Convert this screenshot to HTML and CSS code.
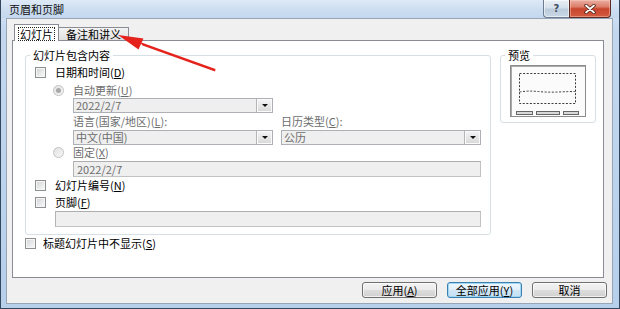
FILE: index.html
```html
<!DOCTYPE html>
<html lang="zh-CN">
<head>
<meta charset="utf-8">
<title>页眉和页脚</title>
<link rel="stylesheet" href="styles.css">
</head>
<body>
<div class="window">
  <div class="titlebar">
    <span class="title">页眉和页脚</span>
    <div class="caption">
      <div class="cap-btn help">?</div>
      <div class="cap-btn close">
        <svg width="12" height="10" viewBox="0 0 12 10">
          <path d="M2 1.5 L10 8.5 M10 1.5 L2 8.5" stroke="#4a1a12" stroke-width="3.4" stroke-linecap="round"/>
          <path d="M2 1.5 L10 8.5 M10 1.5 L2 8.5" stroke="#ffffff" stroke-width="1.8" stroke-linecap="round"/>
        </svg>
      </div>
    </div>
  </div>

  <div class="client">
    <div class="tabs">
      <div class="tab active"><span class="focus">幻灯片</span></div>
      <div class="tab">备注和讲义</div>
    </div>

    <div class="panel">
      <div class="groups">
        <div class="group main">
          <span class="group-label">幻灯片包含内容</span>
          <div class="row r-date"><span class="check"></span>日期和时间(<u>D</u>)</div>
          <div class="row r-auto dis"><span class="radio on"></span>自动更新(<u>U</u>)</div>
          <div class="combo c-date"><span class="ctext">2022/2/7</span><span class="drop"></span></div>
          <div class="pair">
            <div class="lbl dis">语言(国家/地区)(<u>L</u>):</div>
            <div class="lbl dis">日历类型(<u>C</u>):</div>
            <div class="combo"><span class="ctext">中文(中国)</span><span class="drop"></span></div>
            <div class="combo"><span class="ctext">公历</span><span class="drop"></span></div>
          </div>
          <div class="row r-fixed dis"><span class="radio"></span>固定(<u>X</u>)</div>
          <div class="field f-fixed">2022/2/7</div>
          <div class="row r-num"><span class="check"></span>幻灯片编号(<u>N</u>)</div>
          <div class="row r-foot"><span class="check"></span>页脚(<u>F</u>)</div>
          <div class="field f-foot"></div>
        </div>

        <div class="group preview">
          <span class="group-label">预览</span>
          <svg class="thumb" width="76" height="52" viewBox="0 0 76 52">
            <rect x="0.5" y="0.5" width="75" height="51" fill="#fbfbfb" stroke="#8c8c8c"/>
            <path d="M1 1.5 H75 M1.5 1 V51" stroke="#a9a9a9"/>
            <rect x="9.5" y="8.5" width="56" height="30" fill="none" stroke="#3a3a3a" stroke-dasharray="2 1.6"/>
            <path d="M9.5 27 Q 18 25.5 28 26.5 T 48 27 T 65.5 26.5" fill="none" stroke="#3a3a3a" stroke-dasharray="2 1.6"/>
            <rect x="6.5" y="46.5" width="16" height="3" fill="#d9d9d9" stroke="#666"/>
            <rect x="26.5" y="46.5" width="23" height="3" fill="#d9d9d9" stroke="#666"/>
            <rect x="53.5" y="46.5" width="15" height="3" fill="#d9d9d9" stroke="#666"/>
          </svg>
        </div>
      </div>

      <div class="row r-title"><span class="check"></span>标题幻灯片中不显示(<u>S</u>)</div>
    </div>

    <div class="buttons">
      <div class="btn">应用(<u>A</u>)</div>
      <div class="btn default">全部应用(<u>Y</u>)</div>
      <div class="btn">取消</div>
    </div>
  </div>

  <svg class="arrow" width="620" height="309" viewBox="0 0 620 309">
    <polygon points="117,35 142.5,38.5 137.5,49.5" fill="#e5231c"/>
    <polygon points="139,42 141.5,45.5 214,71.5 214.5,69" fill="#e5231c"/>
  </svg>
</div>
</body>
</html>
```
FILE: styles.css
```css
* { box-sizing: border-box; }

html, body {
  margin: 0;
  padding: 0;
  width: 620px;
  height: 309px;
  overflow: hidden;
  background: #2c3b4c;
}

body {
  font-family: "Noto Sans CJK SC", "Noto Sans", sans-serif;
  font-size: 11px;
  line-height: 14px;
  color: #000;
}

u { text-decoration: underline; text-underline-offset: 1px; }

.window {
  position: relative;
  width: 620px;
  height: 309px;
  border: 1px solid #34475c;
  border-top: none;
  padding: 0 6px 4px 5px;
  background: linear-gradient(180deg, #d8e6f5 0%, #c3d8ef 10%, #bcd3ed 60%, #b6cfea 100%);
}

.titlebar {
  height: 18px;
  display: flex;
  align-items: flex-start;
  background: linear-gradient(180deg, #dde9f6 0%, #cbdcf0 60%, #c2d7ee 100%);
  margin: 0 -6px 0 -5px;
  padding: 0 8px 0 7px;
}

.title {
  padding-left: 1px;
  line-height: 18px;
  font-size: 11px;
  color: #101010;
}

.caption {
  margin-left: auto;
  display: flex;
}

.cap-btn {
  height: 18px;
  display: flex;
  align-items: center;
  justify-content: center;
}

.help {
  width: 26px;
  border: 1px solid #6b7c90;
  border-top: none;
  border-right: none;
  border-radius: 0 0 0 4px;
  background: linear-gradient(180deg, #e9eff6 0%, #d5e0eb 48%, #bccbdb 52%, #c9d7e6 100%);
  color: #3e4c5c;
  font-family: "DejaVu Sans", sans-serif;
  font-size: 10px;
  font-weight: bold;
  box-shadow: inset 0 0 0 1px rgba(255,255,255,0.55);
}

.close {
  width: 42px;
  border: 1px solid #5b2a22;
  border-top: none;
  border-radius: 0 0 4px 0;
  background: linear-gradient(180deg, #eab0a3 0%, #dc7d69 40%, #c8452d 52%, #d25a40 100%);
  box-shadow: inset 0 0 0 1px rgba(255,210,200,0.45);
}

.client {
  height: 286px;
  border: 1px solid #97a5b6;
  background: #f0f0f0;
  display: flex;
  flex-direction: column;
}

.tabs {
  margin: 5px 0 0 7px;
  height: 16px;
  display: flex;
  align-items: flex-end;
}

.tab {
  height: 13px;
  border: 1px solid #898c95;
  border-bottom: none;
  border-left: none;
  padding: 0 7px;
  line-height: 12px;
  background: linear-gradient(180deg, #f3f3f3 0%, #ebebeb 50%, #e0e0e0 100%);
  white-space: nowrap;
}

.tab.active {
  position: relative;
  z-index: 1;
  height: 17px;
  margin-bottom: -1px;
  border-left: 1px solid #898c95;
  padding: 2px 3px 0 3px;
  background: #fff;
}

.focus {
  display: inline-block;
  border: 1px dotted #222;
  padding: 0 1px;
  line-height: 12px;
}

.panel {
  height: 238px;
  margin: 0 8px 0 5px;
  border: 1px solid #898c95;
  background: #fff;
  padding: 14px 7px 0 12px;
}

.groups {
  display: flex;
  align-items: flex-start;
  gap: 9px;
}

.group {
  position: relative;
  border: 1px solid #d5dfe5;
  border-radius: 3px;
}

.group-label {
  position: absolute;
  top: -8px;
  left: 4px;
  padding: 0 3px;
  background: #fff;
  line-height: 14px;
  white-space: nowrap;
}

.group.main {
  width: 466px;
  padding: 0 9px 7px 9px;
}

.group.preview {
  width: 96px;
  padding: 9px 0 5px 9px;
}

.thumb { display: block; }

.row {
  display: flex;
  align-items: center;
  height: 14px;
  white-space: nowrap;
}

.dis { color: #6d6d6d; }

.check {
  width: 11px;
  height: 11px;
  margin-right: 9px;
  border: 1px solid #8e8f8f;
  background: linear-gradient(135deg, #cfd2d6 0%, #e8e9eb 55%, #fafafa 100%);
  box-shadow: inset 0 0 0 1px #f6f6f6;
  flex: none;
}

.radio {
  width: 11px;
  height: 11px;
  margin-right: 9px;
  border: 1px solid #c2c2c2;
  border-radius: 50%;
  background: linear-gradient(135deg, #e2e2e2, #f7f7f7);
  flex: none;
  display: flex;
  align-items: center;
  justify-content: center;
}

.radio.on::after {
  content: "";
  width: 5px;
  height: 5px;
  border-radius: 50%;
  background: #a8a8a8;
}

.r-date { margin-top: 9px; }
.r-auto { margin-top: 4px; margin-left: 18px; }
.r-fixed { margin-top: 0; margin-left: 18px; }
.r-num { margin-top: 1px; }
.r-foot { margin-top: 3px; }
.r-title { margin-top: 1px; }
.r-title .check { margin-right: 7px; }

.combo {
  height: 15px;
  border: 1px solid #adb0b4;
  background: #efefef;
  display: flex;
  align-items: stretch;
  color: #6d6d6d;
}

.ctext {
  flex: 1;
  padding-left: 2px;
  line-height: 13px;
  white-space: nowrap;
}

.drop {
  width: 16px;
  border-left: 1px solid #b5b5b5;
  background: linear-gradient(180deg, #f4f4f4 0%, #e6e6e6 50%, #d7d7d7 100%);
  box-shadow: inset 0 0 0 1px #fafafa;
  position: relative;
  display: flex;
  align-items: center;
  justify-content: center;
}

.drop::after {
  content: "";
  width: 0;
  height: 0;
  border-left: 3px solid transparent;
  border-right: 3px solid transparent;
  border-top: 3px solid #111;
}

.c-date {
  width: 200px;
  margin-top: 1px;
  margin-left: 38px;
}

.pair {
  margin-left: 38px;
  display: grid;
  grid-template-columns: 200px 200px;
  column-gap: 8px;
  row-gap: 1px;
  grid-template-rows: 16px 15px;
}

.lbl { line-height: 16px; white-space: nowrap; }

.field {
  height: 16px;
  border: 1px solid #c2c2c2;
  border-top-color: #aeaeae;
  border-left-color: #b4b4b4;
  background: #efefef;
  color: #6d6d6d;
  padding-left: 3px;
  line-height: 14px;
}

.f-fixed { margin-top: 2px; margin-left: 38px; }
.f-foot { margin-top: 2px; margin-left: 20px; }

.buttons {
  margin-top: 4px;
  padding-right: 5px;
  display: flex;
  justify-content: flex-end;
  gap: 10px;
}

.btn {
  width: 75px;
  height: 16px;
  border: 1px solid #707070;
  border-radius: 3px;
  background: linear-gradient(180deg, #f3f3f3 0%, #ebebeb 48%, #dddddd 52%, #d0d0d0 100%);
  box-shadow: inset 0 0 0 1px rgba(255,255,255,0.7);
  text-align: center;
  line-height: 14px;
  white-space: nowrap;
}

.btn.default {
  border-color: #3c7fb1;
  background: linear-gradient(180deg, #eef7fd 0%, #e2f0fa 48%, #cfe6f6 52%, #c4e0f4 100%);
  box-shadow: inset 0 0 0 1px #9fd7f5;
}

.arrow {
  position: absolute;
  left: 0;
  top: 0;
  pointer-events: none;
}
```
